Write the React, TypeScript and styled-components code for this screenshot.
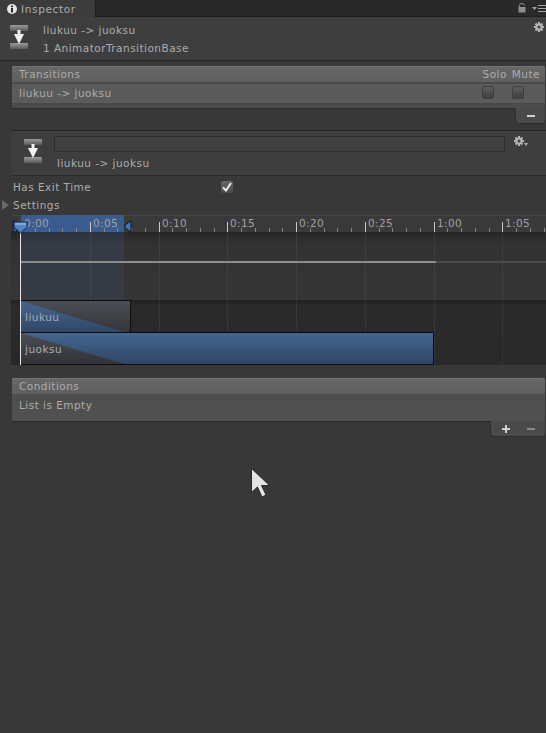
import React from "react";
import styled, { createGlobalStyle } from "styled-components";

const GlobalStyle = createGlobalStyle`
  html, body {
    margin: 0;
    padding: 0;
    background: #383838;
  }
  body {
    font-family: "DejaVu Sans", sans-serif;
    font-size: 10.5px;
    color: #adadad;
  }
`;

const Page = styled.div`
  position: relative;
  width: 546px;
  height: 733px;
  overflow: hidden;
  background: #383838;
`;

const TabBar = styled.div`
  display: flex;
  justify-content: space-between;
  height: 16px;
  background: #292929;
  border-bottom: 1px solid #1f1f1f;
`;
const Tab = styled.div`
  display: flex;
  align-items: center;
  gap: 4px;
  width: 88px;
  height: 17px;
  padding-left: 7px;
  background: #3c3c3c;
  border-right: 1px solid #1c1c1c;
  border-top-right-radius: 3px;
  letter-spacing: 0.65px;
  box-sizing: content-box;
`;
const TabTools = styled.div`
  display: flex;
  align-items: center;
  gap: 6px;
`;

const Header = styled.div`
  display: grid;
  grid-template-columns: 43px 1fr 10px;
  height: 43px;
  background: #3e3e3e;
  border-bottom: 1px solid #232323;
`;
const HeaderIcon = styled.div`
  padding: 8px 0 0 10px;
`;
const HeaderText = styled.div`
  display: flex;
  flex-direction: column;
  gap: 5px;
  padding-top: 7px;
  line-height: 13px;
  letter-spacing: 0.47px;
`;
const GearCorner = styled.div`
  padding-top: 5px;
  margin-left: -2px;
`;

const Panel = styled.div<{ $top: number }>`
  margin: ${(p) => p.$top}px 1px 0 12px;
  border-radius: 2px;
  background: #4f4f4f;
  box-shadow: 0 1px 0 #2a2a2a;
`;
const PanelHead = styled.div`
  display: flex;
  justify-content: space-between;
  height: 15px;
  padding: 0 5px 0 7px;
  line-height: 15px;
  background: linear-gradient(#6a6a6a 0, #666 1px, #5f5f5f 100%);
  border-top: 1px solid #747474;
  border-radius: 2px 2px 0 0;
  letter-spacing: 0.47px;
`;
const HeadRight = styled.div`
  display: flex;
  gap: 5px;
`;
const TransitionRow = styled.div`
  display: flex;
  justify-content: space-between;
  height: 19px;
  padding: 0 21px 0 7px;
  line-height: 18px;
  background: #5b5b5b;
  border-top: 2px solid #4a4a4a;
  border-bottom: 1px solid #484848;
  letter-spacing: 0.47px;
`;
const PanelEnd = styled.div`
  height: 4px;
  background: #4c4c4c;
  border-radius: 0 0 2px 2px;
`;
const EmptyRow = styled.div`
  height: 23px;
  padding: 4px 7px 0;
  line-height: 14px;
  background: linear-gradient(#4e4e4e, #515151);
  border-radius: 0 0 2px 2px;
  letter-spacing: 0.47px;
`;
const Checks = styled.div`
  display: flex;
  gap: 18px;
  padding-top: 2px;
`;
const MiniCheck = styled.div`
  width: 10px;
  height: 11px;
  border: 1px solid #3e3e3e;
  border-radius: 2px;
  background: linear-gradient(#5d5d5d, #3f3f3f);
`;
const FooterWrap = styled.div`
  display: flex;
  justify-content: flex-end;
  margin-right: 1px;
`;
const Footer = styled.div<{ $width: number }>`
  display: flex;
  align-items: center;
  gap: 17px;
  width: ${(p) => p.$width}px;
  height: 15px;
  padding-left: 11px;
  box-sizing: border-box;
  background: #4a4a4a;
  border-radius: 0 0 3px 3px;
  box-shadow: -1px 0 0 #2d2d2d, 0 1px 0 #2a2a2a;
`;
const Sign = styled.span<{ $dim?: boolean }>`
  position: relative;
  display: block;
  width: 8px;
  height: 2px;
  background: ${(p) => (p.$dim ? "#8a8a8a" : "#d2d2d2")};
`;
const PlusBar = styled.span`
  position: absolute;
  left: 3px;
  top: -3px;
  width: 2px;
  height: 8px;
  background: #d2d2d2;
`;

const Section = styled.div`
  display: grid;
  grid-template-columns: 43px 1fr 41px;
  height: 44px;
  margin: 7px 0 2px 11px;
  background: #3e3e3e;
  border-top: 1px solid #232323;
  border-bottom: 1px solid #2b2b2b;
`;
const SectionIcon = styled.div`
  padding: 8px 0 0 13px;
`;
const SectionMiddle = styled.div`
  padding-top: 5px;
`;
const NameField = styled.div`
  height: 14px;
  background: #404040;
  border: 1px solid #2c2c2c;
  border-bottom-color: #333;
`;
const NameLabel = styled.div`
  margin: 4px 0 0 3px;
  line-height: 14px;
  letter-spacing: 0.47px;
`;
const GearCell = styled.div`
  padding: 5px 0 0 9px;
`;
const PropRow = styled.div`
  display: flex;
  align-items: center;
  height: 18px;
  padding-left: 13px;
  letter-spacing: 0.47px;
`;
const PropLabel = styled.span`
  width: 208px;
`;
const CheckBox = styled.div`
  display: flex;
  align-items: center;
  justify-content: center;
  width: 12px;
  height: 12px;
  border-radius: 2px;
  background: linear-gradient(#666, #4b4b4b);
`;
const Foldout = styled.span`
  position: absolute;
  left: 2px;
  width: 0;
  height: 0;
  border-left: 7px solid #6a6a6a;
  border-top: 5px solid transparent;
  border-bottom: 5px solid transparent;
`;

const Timeline = styled.div`
  position: relative;
  height: 150px;
  margin: 1px 0 0 11px;
  overflow: hidden;
`;
const Ruler = styled.div`
  height: 16px;
  background: #3a3a3a;
  border-top: 1px solid #454545;
`;
const CurveArea = styled.div`
  height: 68px;
  background: linear-gradient(#262626 0, #323232 12px, #353535 100%);
`;
const ClipArea = styled.div`
  height: 65px;
  background: linear-gradient(#222 0, #2a2a2a 6px, #292929 100%);
`;
const RangeHead = styled.div`
  position: absolute;
  left: 10px;
  top: 0;
  width: 103px;
  height: 17px;
  background: #3b5c8f;
`;
const RangeBody = styled.div`
  position: absolute;
  left: 10px;
  top: 17px;
  width: 103px;
  height: 68px;
  background: linear-gradient(rgba(58, 84, 128, 0.28), rgba(58, 84, 128, 0.2));
`;
const Stamp = styled.span<{ $x: number }>`
  position: absolute;
  left: ${(p) => p.$x}px;
  top: 2px;
  font-size: 10.5px;
  line-height: 13px;
  color: #a0a0a0;
  letter-spacing: 0.4px;
`;
const Overlay = styled.svg`
  position: absolute;
  left: 0;
  top: 0;
`;
const Clip = styled.div<{ $top: number; $width: number; $blue: boolean }>`
  position: absolute;
  left: 10px;
  top: ${(p) => p.$top}px;
  width: ${(p) => p.$width}px;
  height: 31px;
  overflow: hidden;
  background: ${(p) =>
    p.$blue
      ? "linear-gradient(#46668f, #2f4666)"
      : "linear-gradient(#4b4e54, #33353a)"};
  border: 1px solid #0d0d0d;
  border-left: 0;
  border-bottom-width: ${(p) => (p.$blue ? 1 : 0)}px;
  box-sizing: content-box;
`;
const ClipShade = styled.div<{ $blue: boolean }>`
  position: absolute;
  inset: 0;
  width: 103px;
  background: ${(p) =>
    p.$blue
      ? "linear-gradient(#4a4d53, #313338)"
      : "linear-gradient(#47668f, #2f4768)"};
  clip-path: polygon(0 0, 100% 100%, 0 100%);
`;
const ClipName = styled.span`
  position: absolute;
  left: 4px;
  top: 10px;
  line-height: 13px;
  color: #a6acb5;
  letter-spacing: 0.47px;
`;
const CursorArrow = styled.svg`
  position: absolute;
  left: 250px;
  top: 467px;
`;

const TransitionIcon = () => (
  <svg width="18" height="24" viewBox="0 0 18 24">
    <defs>
      <linearGradient id="barShade" x1="0" y1="0" x2="0" y2="1">
        <stop offset="0" stopColor="#9a9a9a" />
        <stop offset="1" stopColor="#5a5a5a" />
      </linearGradient>
    </defs>
    <rect x="0" y="0" width="18" height="6" rx="1" fill="url(#barShade)" />
    <rect x="0" y="18" width="18" height="6" rx="1" fill="url(#barShade)" />
    <path d="M7.5 5h3v4H14l-5 10-5-10h3.5z" fill="#f2f2f2" />
  </svg>
);

const Gear = ({ drop }: { drop?: boolean }) => (
  <svg width="15" height="12" viewBox="0 0 15 12">
    <g stroke="#b5b5b5" strokeWidth="2">
      <path d="M5 0v10M0 5h10M1.5 1.5l7 7M8.5 1.5l-7 7" />
    </g>
    <circle cx="5" cy="5" r="3.6" fill="#b5b5b5" />
    <circle cx="5" cy="5" r="1.5" fill="#3e3e3e" />
    {drop && <path d="M10 7h4l-2 3z" fill="#b5b5b5" />}
  </svg>
);

const InfoIcon = () => (
  <svg width="10" height="10" viewBox="0 0 10 10">
    <circle cx="5" cy="5" r="5" fill="#e4e4e4" />
    <rect x="4" y="1.5" width="2" height="1.6" fill="#2a2a2a" />
    <rect x="4" y="4" width="2" height="4.5" fill="#2a2a2a" />
  </svg>
);

const LockIcon = () => (
  <svg width="8" height="10" viewBox="0 0 8 10">
    <path d="M1.5 4V2.5a2.5 2 0 0 1 5 0" fill="none" stroke="#8f8f8f" strokeWidth="1" />
    <rect x="0.5" y="4" width="7" height="5.5" fill="#8f8f8f" />
  </svg>
);

const MenuIcon = () => (
  <svg width="14" height="7" viewBox="0 0 14 7">
    <path d="M0 2h5L2.5 5z" fill="#a5a5a5" />
    <path d="M6 .5h8M6 3.5h8M6 6.5h8" stroke="#a5a5a5" strokeWidth="1" />
  </svg>
);

const Tick = () => (
  <svg width="10" height="10" viewBox="0 0 10 10">
    <path d="M1 5.5l3 3L9 1" fill="none" stroke="#f0f0f0" strokeWidth="2" />
  </svg>
);

const MAJOR_STEP = 68.75;
const ORIGIN = 10;
const stamps = ["0:00", "0:05", "0:10", "0:15", "0:20", "0:25", "1:00", "1:05"];

const TimelineMarks = () => {
  const lines: React.ReactNode[] = [];
  for (let i = 0; i < 40; i++) {
    const x = Math.round(ORIGIN + (i * MAJOR_STEP) / 5) + 0.5;
    if (x > 535) break;
    const major = i % 5 === 0;
    lines.push(
      <line key={`t${i}`} x1={x} x2={x} y1={major ? 7 : 13} y2={17} stroke={major ? "#c8c8c8" : "#858585"} />
    );
    if (major && i > 0) {
      lines.push(<line key={`g${i}`} x1={x} x2={x} y1={17} y2={150} stroke="rgba(255,255,255,0.06)" />);
    }
  }
  return (
    <Overlay width="535" height="150">
      {lines}
      <line x1="10" x2="425" y1="47" y2="47" stroke="#8c8c8c" strokeWidth="2" />
      <line x1="425" x2="535" y1="47" y2="47" stroke="#4a4a4a" strokeWidth="2" />
    </Overlay>
  );
};

const RangeHandles = () => (
  <Overlay width="535" height="150">
    <line x1="9.5" x2="9.5" y1="14" y2="150" stroke="#e6e6e6" />
    <path d="M2 6h3l4 4-4 7H2z" fill="#2f5c9c" stroke="#111" />
    <path d="M114 10l6-4v11l-6-4z" fill="#3f78c4" stroke="#111" />
    <path d="M3 7h13v5l-6.5 6L3 12z" fill="#4f85c9" stroke="#163056" />
    <path d="M4 8h11v2H4z" fill="#8fa9cc" />
  </Overlay>
);

const App = () => {
  return (
    <Page>
      <GlobalStyle />
      <TabBar>
        <Tab>
          <InfoIcon />
          Inspector
        </Tab>
        <TabTools>
          <LockIcon />
          <MenuIcon />
        </TabTools>
      </TabBar>
      <Header>
        <HeaderIcon>
          <TransitionIcon />
        </HeaderIcon>
        <HeaderText>
          <span>liukuu -&gt; juoksu</span>
          <span>1 AnimatorTransitionBase</span>
        </HeaderText>
        <GearCorner>
          <Gear />
        </GearCorner>
      </Header>

      <Panel $top={5}>
        <PanelHead>
          <span>Transitions</span>
          <HeadRight>
            <span>Solo</span>
            <span>Mute</span>
          </HeadRight>
        </PanelHead>
        <TransitionRow>
          <span>liukuu -&gt; juoksu</span>
          <Checks>
            <MiniCheck />
            <MiniCheck />
          </Checks>
        </TransitionRow>
        <PanelEnd />
      </Panel>
      <FooterWrap>
        <Footer $width={29}>
          <Sign />
        </Footer>
      </FooterWrap>

      <Section>
        <SectionIcon>
          <TransitionIcon />
        </SectionIcon>
        <SectionMiddle>
          <NameField />
          <NameLabel>liukuu -&gt; juoksu</NameLabel>
        </SectionMiddle>
        <GearCell>
          <Gear drop />
        </GearCell>
      </Section>

      <PropRow>
        <PropLabel>Has Exit Time</PropLabel>
        <CheckBox>
          <Tick />
        </CheckBox>
      </PropRow>
      <PropRow>
        <Foldout />
        Settings
      </PropRow>

      <Timeline>
        <Ruler />
        <CurveArea />
        <ClipArea />
        <RangeHead />
        <RangeBody />
        {stamps.map((s, i) => (
          <Stamp key={s} $x={Math.round(ORIGIN + i * MAJOR_STEP) + 3}>
            {s}
          </Stamp>
        ))}
        <TimelineMarks />
        <Clip $top={85} $width={109} $blue={false}>
          <ClipShade $blue={false} />
          <ClipName>liukuu</ClipName>
        </Clip>
        <Clip $top={117} $width={412} $blue={true}>
          <ClipShade $blue={true} />
          <ClipName>juoksu</ClipName>
        </Clip>
        <RangeHandles />
      </Timeline>

      <Panel $top={13}>
        <PanelHead>
          <span>Conditions</span>
        </PanelHead>
        <EmptyRow>List is Empty</EmptyRow>
      </Panel>
      <FooterWrap>
        <Footer $width={54}>
          <Sign>
            <PlusBar />
          </Sign>
          <Sign $dim />
        </Footer>
      </FooterWrap>

      <CursorArrow width="22" height="32" viewBox="0 0 22 32">
        <path d="M1.5 1.5v24l6-5.5 4.5 10 4-2-4.5-9.5h8z" fill="#e4e4e4" stroke="#2a2a2a" />
      </CursorArrow>
    </Page>
  );
};

export default App;
